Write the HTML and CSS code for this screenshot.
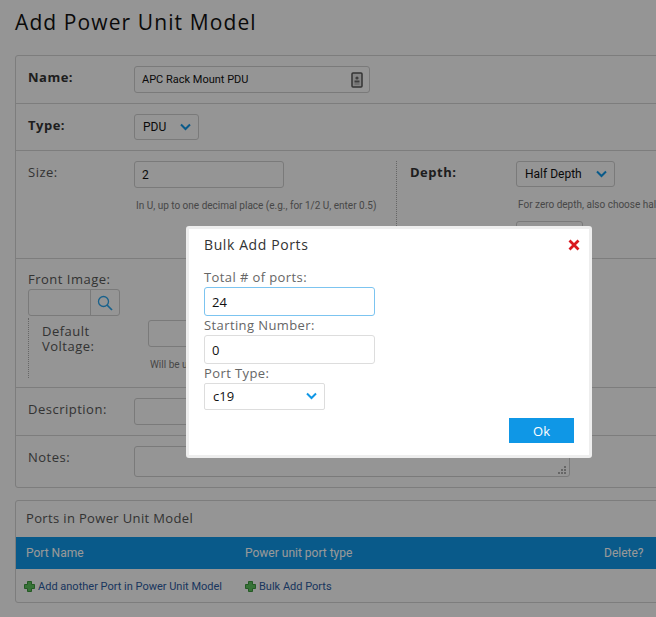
FILE: index.html
```html
<!DOCTYPE html>
<html lang="en">
<head>
  <meta charset="UTF-8">
  <title>Add Power Unit Model</title>
  <link rel="stylesheet" href="styles.css">
</head>
<body>
  <h1>Add Power Unit Model</h1>

  <div class="card">
    <div class="row row-name">
      <label class="label strong">Name:</label>
      <div class="input input-name">
        <span>APC Rack Mount PDU</span>
        <svg class="field-icon" width="12" height="16" viewBox="0 0 12 16"><rect x="1" y="1" width="10" height="14" rx="1" fill="#ddd" stroke="#555" stroke-width="1.5"/><circle cx="6" cy="6" r="1.6" fill="#666"/><rect x="3.5" y="8.5" width="5" height="2" fill="#666"/><rect x="3.5" y="11.5" width="5" height="1" fill="#999"/></svg>
      </div>
    </div>
    <div class="row row-type">
      <label class="label strong">Type:</label>
      <div class="select select-type">
        <span>PDU</span>
        <svg class="chevron" width="11" height="8" viewBox="0 0 11 8"><path d="M1 1.5l4.5 4.5 4.5-4.5" fill="none" stroke="#0f97e6" stroke-width="2"/></svg>
      </div>
    </div>
    <div class="row row-size">
      <div class="size-col">
        <label class="label">Size:</label>
        <div>
          <div class="input input-size"><span>2</span></div>
          <p class="hint">In U, up to one decimal place (e.g., for 1/2 U, enter 0.5)</p>
        </div>
      </div>
      <div class="depth-col">
        <label class="label depth-label strong">Depth:</label>
        <div>
          <div class="select select-depth">
            <span>Half Depth</span>
            <svg class="chevron" width="11" height="8" viewBox="0 0 11 8"><path d="M1 1.5l4.5 4.5 4.5-4.5" fill="none" stroke="#0f97e6" stroke-width="2"/></svg>
          </div>
          <p class="hint hint-depth">For zero depth, also choose half depth here</p>
          <div class="input input-depth"></div>
        </div>
      </div>
    </div>
    <div class="row row-image">
      <label class="label image-label">Front Image:</label>
      <div class="search">
        <div class="search-box"></div>
        <div class="search-btn">
          <svg width="16" height="16" viewBox="0 0 16 16"><circle cx="6.5" cy="6.5" r="5" fill="none" stroke="#2ba3ea" stroke-width="1.3"/><path d="M10 10l5 5" stroke="#2ba3ea" stroke-width="1.7"/></svg>
        </div>
      </div>
      <div class="voltage">
        <label class="label voltage-label">Default<br>Voltage:</label>
        <div>
          <div class="input input-voltage"></div>
          <p class="hint hint-voltage">Will be used</p>
        </div>
      </div>
    </div>
    <div class="row row-desc">
      <label class="label">Description:</label>
      <div class="input input-wide"></div>
    </div>
    <div class="row row-notes">
      <label class="label">Notes:</label>
      <div class="input input-wide input-notes">
        <svg class="grip" width="9" height="9" viewBox="0 0 9 9"><path d="M6 0h2v2H6zM3 3h2v2H3zM6 3h2v2H6zM0 6h2v2H0zM3 6h2v2H3zM6 6h2v2H6z" fill="#aaa"/></svg>
      </div>
    </div>
  </div>

  <div class="card ports">
    <div class="ports-title">Ports in Power Unit Model</div>
    <div class="ports-head">
      <span class="col-name">Port Name</span>
      <span class="col-type">Power unit port type</span>
      <span class="col-del">Delete?</span>
    </div>
    <div class="ports-foot">
      <a class="add-link link-another">
        <svg width="11" height="11" viewBox="0 0 11 11"><path d="M3.5 .5h4v3h3v4h-3v3h-4v-3h-3v-4h3z" fill="#5cbf5c" stroke="#3c963c"/></svg>
        Add another Port in Power Unit Model
      </a>
      <a class="add-link">
        <svg width="11" height="11" viewBox="0 0 11 11"><path d="M3.5 .5h4v3h3v4h-3v3h-4v-3h-3v-4h3z" fill="#5cbf5c" stroke="#3c963c"/></svg>
        Bulk Add Ports
      </a>
    </div>
  </div>

  <div class="overlay"></div>

  <div class="modal">
    <div class="modal-head">
      <h2>Bulk Add Ports</h2>
      <svg class="close" width="12" height="12" viewBox="0 0 12 12"><path d="M1.5 1.5l9 9M10.5 1.5l-9 9" stroke="#d9171e" stroke-width="2.8"/></svg>
    </div>
    <label class="modal-label">Total # of ports:</label>
    <div class="modal-input focused">24</div>
    <label class="modal-label">Starting Number:</label>
    <div class="modal-input">0</div>
    <label class="modal-label">Port Type:</label>
    <div class="modal-select">
      <span>c19</span>
      <svg width="11" height="8" viewBox="0 0 11 8"><path d="M1 1.5l4.5 4.5 4.5-4.5" fill="none" stroke="#0f97e6" stroke-width="2"/></svg>
    </div>
    <div class="modal-foot">
      <button class="ok-btn">Ok</button>
    </div>
  </div>
</body>
</html>
```

FILE: styles.css
```css
html, body {
  height: 100%;
  overflow: hidden;
}

body {
  margin: 0;
  padding: 0 0 0 15px;
  background-color: #f8f8f8;
  font-family: 'Open Sans', sans-serif;
  color: #333;
}

h1 {
  margin: 0;
  padding-top: 7px;
  height: 55px;
  box-sizing: border-box;
  font-size: 21px;
  line-height: 30px;
  font-weight: 400;
  letter-spacing: 1.1px;
  color: #111;
}

.card {
  width: 680px;
  border: 1px solid #d0d0d0;
  border-radius: 3px;
  box-sizing: border-box;
}

.row {
  display: flex;
  padding-left: 12px;
  border-bottom: 1px solid #d0d0d0;
  box-sizing: border-box;
}

.row:last-child {
  border-bottom: none;
}

.row-name { height: 48px; padding-top: 10px; }
.row-type { height: 47px; padding-top: 10px; }
.row-size { height: 108px; padding-top: 10px; }
.row-image { height: 129px; display: block; padding-top: 11px; }
.row-desc { height: 48px; padding-top: 10px; }
.row-notes { height: 51px; padding-top: 10px; }

.label {
  display: block;
  width: 106px;
  flex-shrink: 0;
  margin-top: 1px;
  font-size: 13px;
  line-height: 20px;
  letter-spacing: .5px;
  color: #555;
}

.label.strong {
  font-weight: 700;
  color: #333;
}

.input, .select {
  display: flex;
  align-items: center;
  height: 27px;
  box-sizing: border-box;
  background-color: #f8f8f8;
  border: 1px solid #ccc;
  border-radius: 3px;
  font-family: 'Roboto', sans-serif;
  font-size: 12px;
  color: #111;
}

.input { padding-left: 7px; }
.select { padding-left: 8px; justify-content: space-between; padding-right: 7px; }

.input-name { width: 236px; justify-content: space-between; padding-right: 6px; font-size: 11px; }
.input-size { width: 150px; }
.input-wide { width: 436px; }
.input-notes { height: 31px; position: relative; }
.input-depth { width: 67px; margin-top: 10px; }
.input-voltage { width: 100px; }

.select-type { width: 65px; height: 26px; }
.select-depth { width: 99px; height: 26px; }

.grip {
  position: absolute;
  right: 2px;
  bottom: 1px;
}

.hint {
  margin: 11px 0 0 2px;
  font-family: 'Roboto', sans-serif;
  font-size: 10px;
  line-height: 13px;
  white-space: nowrap;
  color: #777;
}

.size-col {
  display: flex;
  width: 368px;
  flex-shrink: 0;
}

.depth-col {
  display: flex;
  border-left: 1px dotted #aaa;
  padding-left: 13px;
  height: 95px;
}

.depth-label { width: 106px; }

.image-label {
  width: auto;
  line-height: 18px;
  margin: 0 0 1px;
}

.search {
  display: flex;
  width: 92px;
  height: 27px;
  box-sizing: border-box;
  border: 1px solid #ccc;
  border-radius: 3px;
}

.search-box {
  width: 61px;
  border-right: 1px solid #ccc;
}

.search-btn {
  flex: 1;
  display: flex;
  align-items: center;
  justify-content: center;
}

.voltage {
  display: flex;
  margin-top: 2px;
  padding: 2px 0 0 13px;
  height: 60px;
  box-sizing: border-box;
  border-left: 1px dotted #aaa;
}

.voltage-label {
  width: 106px;
  margin-top: 4px;
  line-height: 15px;
}

.hint-voltage { margin-top: 11px; }

.ports {
  margin-top: 12px;
  height: 103px;
}

.ports-title {
  height: 36px;
  padding-left: 10px;
  font-size: 13px;
  line-height: 34px;
  letter-spacing: .35px;
  color: #555;
}

.ports-head {
  display: flex;
  align-items: center;
  height: 32px;
  padding-left: 10px;
  background-color: #0f97e6;
  font-family: 'Roboto', sans-serif;
  font-size: 12px;
  color: #fff;
}

.col-name { width: 219px; }
.col-type { width: 359px; }

.ports-foot {
  display: flex;
  align-items: center;
  height: 33px;
  padding: 2px 0 0 8px;
  box-sizing: border-box;
}

.add-link {
  display: flex;
  align-items: center;
  gap: 3px;
  font-family: 'Roboto', sans-serif;
  font-size: 11px;
  color: #2c5a9e;
}

.link-another { width: 221px; }

.overlay {
  position: fixed;
  inset: 0;
  background-color: rgba(0, 0, 0, .4);
}

.modal {
  position: absolute;
  left: 186px;
  top: 226px;
  width: 406px;
  height: 232px;
  box-sizing: border-box;
  padding: 0 15px 0 15px;
  background-color: #fff;
  border: 3px solid #eee;
  border-radius: 3px;
}

.modal-head {
  display: flex;
  justify-content: space-between;
  align-items: center;
  height: 31px;
  margin-bottom: 8px;
}

.modal-head h2 {
  margin: 0;
  font-size: 14px;
  font-weight: 400;
  letter-spacing: .6px;
  color: #333;
}

.close { margin-right: -6px; }

.modal-label {
  display: block;
  height: 19px;
  font-size: 13px;
  line-height: 18px;
  letter-spacing: .4px;
  color: #666;
}

.modal-input {
  width: 171px;
  height: 29px;
  box-sizing: border-box;
  padding-left: 7px;
  border: 1px solid #ddd;
  border-radius: 3px;
  font-size: 13px;
  line-height: 28px;
  color: #111;
}

.modal-input.focused { border-color: #7cc4f0; }

.modal-select {
  display: flex;
  align-items: center;
  justify-content: space-between;
  width: 121px;
  height: 27px;
  box-sizing: border-box;
  padding: 0 7px 1px 8px;
  border: 1px solid #ddd;
  border-radius: 2px;
  font-size: 13px;
  color: #111;
}

.modal-foot {
  display: flex;
  justify-content: flex-end;
  margin-top: 8px;
}

.ok-btn {
  width: 65px;
  height: 25px;
  border: none;
  background-color: #0f97e6;
  font-family: 'Open Sans', sans-serif;
  font-size: 13px;
  color: #fff;
}
```
